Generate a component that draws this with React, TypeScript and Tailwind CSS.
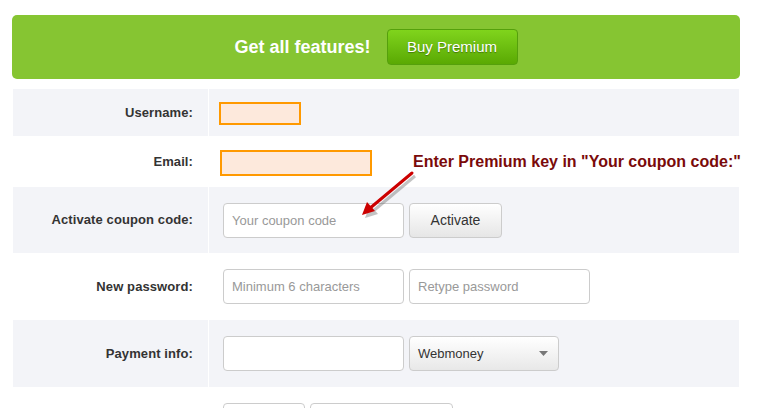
import React from "react";

const inputClass =
  "h-[35px] rounded-[4px] border border-[#cccccc] bg-white px-[8px] text-[13px] text-[#333] placeholder:text-[#999] outline-none";

function Row({ label, gray, h, children }: { label: string; gray?: boolean; h: string; children?: React.ReactNode }) {
  return (
    <div className={`flex ${h} ${gray ? "bg-[#f3f4f8]" : "bg-white"}`}>
      <div className="flex w-[195px] items-center justify-end pr-[15px] text-[13px] font-bold tracking-[0.1px] text-[#333]">{label}</div>
      <div className="w-px bg-white" />
      <div className="flex flex-1 items-center">{children}</div>
    </div>
  );
}

export default function App() {
  return (
    <div className="relative h-[408px] w-[757px] overflow-hidden bg-white font-['Liberation_Sans',Arial,sans-serif]">
      <div className="ml-[12px] mt-[15px] flex h-[64px] w-[728px] items-center justify-center gap-[16px] rounded-[5px] bg-[#86c532]">
        <span className="text-[18px] font-bold text-white">Get all features!</span>
        <button className="h-[36px] w-[131px] rounded-[4px] border border-[#55a00c] bg-gradient-to-b from-[#80d41c] to-[#5aa903] text-[15px] text-white [text-shadow:0_1px_1px_rgba(0,0,0,0.35)]">
          Buy Premium
        </button>
      </div>

      <div className="ml-[13px] mt-[10px] w-[726px]">
        <Row label="Username:" gray h="h-[47px]">
          <div className="ml-[10px] mt-[1px] h-[23px] w-[82px] border-2 border-[#ff9900] bg-[#fde9dc]" />
        </Row>
        <Row label="Email:" h="h-[51px]">
          <div className="ml-[11px] mt-[2px] h-[26px] w-[152px] border-2 border-[#ff9900] bg-[#fde9dc]" />
        </Row>
        <Row label="Activate coupon code:" gray h="h-[66px]">
          <div className="ml-[14px] flex gap-[5px]">
            <input className={`${inputClass} w-[181px]`} placeholder="Your coupon code" />
            <button className="h-[35px] w-[93px] rounded-[4px] border border-[#cccccc] bg-gradient-to-b from-white to-[#e6e6e6] text-[14px] text-[#333]">
              Activate
            </button>
          </div>
        </Row>
        <Row label="New password:" h="h-[67px]">
          <div className="ml-[14px] flex gap-[5px]">
            <input className={`${inputClass} w-[181px]`} placeholder="Minimum 6 characters" />
            <input className={`${inputClass} w-[181px]`} placeholder="Retype password" />
          </div>
        </Row>
        <Row label="Payment info:" gray h="h-[67px]">
          <div className="ml-[14px] flex gap-[5px]">
            <input className={`${inputClass} w-[181px]`} />
            <div className="flex h-[35px] w-[150px] items-center justify-between rounded-[4px] border border-[#cccccc] bg-gradient-to-b from-white to-[#e8e8e8] px-[8px] text-[13px] text-[#333]">
              <span>Webmoney</span>
              <svg width="9" height="5" viewBox="0 0 9 5" className="mr-[2px]">
                <path d="M0 0 L9 0 L4.5 5 Z" fill="#777" />
              </svg>
            </div>
          </div>
        </Row>
        <Row label="" h="h-[67px]">
          <div className="ml-[14px] flex gap-[5px] self-start pt-[16px]">
            <div className="h-[35px] w-[82px] rounded-[4px] border border-[#cccccc] bg-white" />
            <div className="h-[35px] w-[143px] rounded-[4px] border border-[#cccccc] bg-white" />
          </div>
        </Row>
      </div>

      <div className="absolute left-[413px] top-[150px] text-[16px] font-bold text-[#7a0a0a]">
        Enter Premium key in "Your coupon code:"
      </div>
      <svg className="absolute left-[355px] top-[168px]" width="70" height="55" viewBox="0 0 70 55">
        <g transform="translate(3,3)" opacity="0.35">
          <path d="M57 5 L14 41" stroke="#555" strokeWidth="3" fill="none" />
          <path d="M7 47 L12 34 L20 43 Z" fill="#555" />
        </g>
        <path d="M57 5 L14 41" stroke="#cc0000" strokeWidth="3" fill="none" strokeLinecap="round" />
        <path d="M7 47 L12 34 L20 43 Z" fill="#cc0000" />
      </svg>
    </div>
  );
}
